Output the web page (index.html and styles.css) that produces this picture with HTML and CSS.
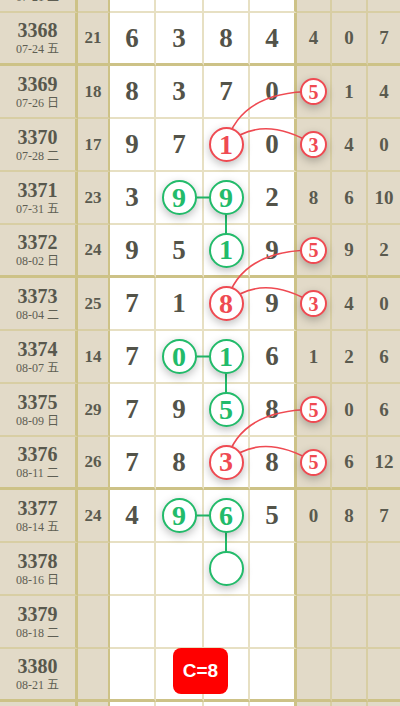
FILE: index.html
```html
<!DOCTYPE html>
<html lang="zh">
<head>
<meta charset="utf-8">
<title>走势图</title>
<link rel="stylesheet" href="styles.css">
</head>
<body>
<div class="board">
  <div class="row"><div class="c p"><b>3367</b><i>07-21 二</i></div><div class="c s"></div><div class="c w"></div><div class="c w"></div><div class="c w"></div><div class="c w"></div><div class="c b"></div><div class="c b"></div><div class="c b"></div></div>
  <div class="row end"><div class="c p"><b>3368</b><i>07-24 五</i></div><div class="c s">21</div><div class="c w">6</div><div class="c w">3</div><div class="c w">8</div><div class="c w">4</div><div class="c b">4</div><div class="c b">0</div><div class="c b">7</div></div>
  <div class="row"><div class="c p"><b>3369</b><i>07-26 日</i></div><div class="c s">18</div><div class="c w">8</div><div class="c w">3</div><div class="c w">7</div><div class="c w">0</div><div class="c b"><span class="ball sm red">5</span></div><div class="c b">1</div><div class="c b">4</div></div>
  <div class="row"><div class="c p"><b>3370</b><i>07-28 二</i></div><div class="c s">17</div><div class="c w">9</div><div class="c w">7</div><div class="c w"><span class="ball red">1</span></div><div class="c w">0</div><div class="c b"><span class="ball sm red">3</span></div><div class="c b">4</div><div class="c b">0</div></div>
  <div class="row"><div class="c p"><b>3371</b><i>07-31 五</i></div><div class="c s">23</div><div class="c w">3</div><div class="c w"><span class="ball green">9</span></div><div class="c w"><span class="ball green">9</span></div><div class="c w">2</div><div class="c b">8</div><div class="c b">6</div><div class="c b">10</div></div>
  <div class="row end"><div class="c p"><b>3372</b><i>08-02 日</i></div><div class="c s">24</div><div class="c w">9</div><div class="c w">5</div><div class="c w"><span class="ball green">1</span></div><div class="c w">9</div><div class="c b"><span class="ball sm red">5</span></div><div class="c b">9</div><div class="c b">2</div></div>
  <div class="row"><div class="c p"><b>3373</b><i>08-04 二</i></div><div class="c s">25</div><div class="c w">7</div><div class="c w">1</div><div class="c w"><span class="ball red">8</span></div><div class="c w">9</div><div class="c b"><span class="ball sm red">3</span></div><div class="c b">4</div><div class="c b">0</div></div>
  <div class="row"><div class="c p"><b>3374</b><i>08-07 五</i></div><div class="c s">14</div><div class="c w">7</div><div class="c w"><span class="ball green">0</span></div><div class="c w"><span class="ball green">1</span></div><div class="c w">6</div><div class="c b">1</div><div class="c b">2</div><div class="c b">6</div></div>
  <div class="row"><div class="c p"><b>3375</b><i>08-09 日</i></div><div class="c s">29</div><div class="c w">7</div><div class="c w">9</div><div class="c w"><span class="ball green">5</span></div><div class="c w">8</div><div class="c b"><span class="ball sm red">5</span></div><div class="c b">0</div><div class="c b">6</div></div>
  <div class="row end"><div class="c p"><b>3376</b><i>08-11 二</i></div><div class="c s">26</div><div class="c w">7</div><div class="c w">8</div><div class="c w"><span class="ball red">3</span></div><div class="c w">8</div><div class="c b"><span class="ball sm red">5</span></div><div class="c b">6</div><div class="c b">12</div></div>
  <div class="row"><div class="c p"><b>3377</b><i>08-14 五</i></div><div class="c s">24</div><div class="c w">4</div><div class="c w"><span class="ball green">9</span></div><div class="c w"><span class="ball green">6</span></div><div class="c w">5</div><div class="c b">0</div><div class="c b">8</div><div class="c b">7</div></div>
  <div class="row"><div class="c p"><b>3378</b><i>08-16 日</i></div><div class="c s"></div><div class="c w"></div><div class="c w"></div><div class="c w"><span class="ball green"></span></div><div class="c w"></div><div class="c b"></div><div class="c b"></div><div class="c b"></div></div>
  <div class="row"><div class="c p"><b>3379</b><i>08-18 二</i></div><div class="c s"></div><div class="c w"></div><div class="c w"></div><div class="c w"></div><div class="c w"></div><div class="c b"></div><div class="c b"></div><div class="c b"></div></div>
  <div class="row end"><div class="c p"><b>3380</b><i>08-21 五</i></div><div class="c s"></div><div class="c w"></div><div class="c w"></div><div class="c w"></div><div class="c w"></div><div class="c b"></div><div class="c b"></div><div class="c b"></div></div>
  <div class="row"><div class="c p"></div><div class="c s"></div><div class="c w"></div><div class="c w"></div><div class="c w"></div><div class="c w"></div><div class="c b"></div><div class="c b"></div><div class="c b"></div></div>

  <svg class="links" width="400" height="795" viewBox="0 -40 400 795">
    <g stroke="#22bb6a" stroke-width="2" fill="none">
      <path d="M179 197.5 H226 V250"/>
      <path d="M179 356.5 H226 V409.5"/>
      <path d="M179 515.5 H226 V568.5"/>
    </g>
    <g stroke="#ef4a52" stroke-width="1.6" fill="none">
      <path d="M226 144.5 Q240 91.5 313.5 91.5"/>
      <path d="M226 144.5 Q262 113 313.5 144.5"/>
      <path d="M226 303.5 Q240 250 313.5 250"/>
      <path d="M226 303.5 Q262 272 313.5 303.5"/>
      <path d="M226 462 Q240 409.5 313.5 409.5"/>
      <path d="M226 462 Q262 431 313.5 462"/>
    </g>
  </svg>
  <div class="badge">C=8</div>
</div>
</body>
</html>
```
FILE: styles.css
```css
html, body {
  margin: 0;
  padding: 0;
  background: #ffffff;
  overflow: hidden;
}

.board {
  position: relative;
  z-index: 0;
  width: 400px;
  margin-top: -40px;
  font-family: "Liberation Serif", "Noto Sans CJK SC", serif;
  color: #535349;
}

.row {
  display: grid;
  grid-template-columns: 78px 32px 46px 48px 46px 47px 35px 36px 32px;
  height: 53px;
}

.c {
  box-sizing: border-box;
  display: flex;
  align-items: center;
  justify-content: center;
  font-weight: bold;
  border-bottom: 2px solid #e7e0c3;
}

.p {
  background: #e2dac8;
  border-right: 3px solid #cdc287;
  border-bottom-color: #d8cea4;
  flex-direction: column;
}

.p b {
  font-size: 20px;
  line-height: 22px;
  color: #58584d;
}

.p i {
  font-style: normal;
  font-weight: normal;
  font-size: 12px;
  line-height: 16px;
  color: #5e5e53;
}

.s {
  background: #e2dac8;
  border-right: 2px solid #cdc287;
  border-bottom-color: #d8cea4;
  font-size: 17px;
  color: #5a5a4f;
}

.w {
  background: #ffffff;
  border-right: 2px solid #e7e0c3;
  font-size: 27px;
}

.w:nth-child(6) {
  border-right: 3px solid #cdc287;
}

.b {
  background: #e2dac8;
  border-right: 2px solid #d8cea4;
  border-bottom-color: #d8cea4;
  font-size: 19px;
  color: #5a5a4f;
}

.b:last-child {
  border-right: none;
}

.row.end .c {
  border-bottom: 3px solid #cdc287;
}

.ball {
  position: relative;
  z-index: 2;
  box-sizing: border-box;
  width: 35px;
  height: 35px;
  border-radius: 50%;
  background: #ffffff;
  border: 2px solid;
  display: flex;
  align-items: center;
  justify-content: center;
  font-size: 28px;
  line-height: 1;
  box-shadow: 0 3px 9px rgba(0, 0, 0, 0.25);
}

.ball.sm {
  width: 27px;
  height: 27px;
  font-size: 20px;
}

.red {
  color: #ef4a52;
  border-color: #ef4a52;
}

.green {
  color: #22bb6a;
  border-color: #22bb6a;
}

.links {
  position: absolute;
  top: 0;
  left: 0;
  z-index: 1;
  pointer-events: none;
}

.badge {
  position: absolute;
  z-index: 3;
  left: 173px;
  top: 688px;
  width: 55px;
  height: 46px;
  border-radius: 8px;
  background: #ff0000;
  color: #ffffff;
  font-family: "Liberation Sans", Arial, sans-serif;
  font-weight: bold;
  font-size: 19px;
  display: flex;
  align-items: center;
  justify-content: center;
}
```
